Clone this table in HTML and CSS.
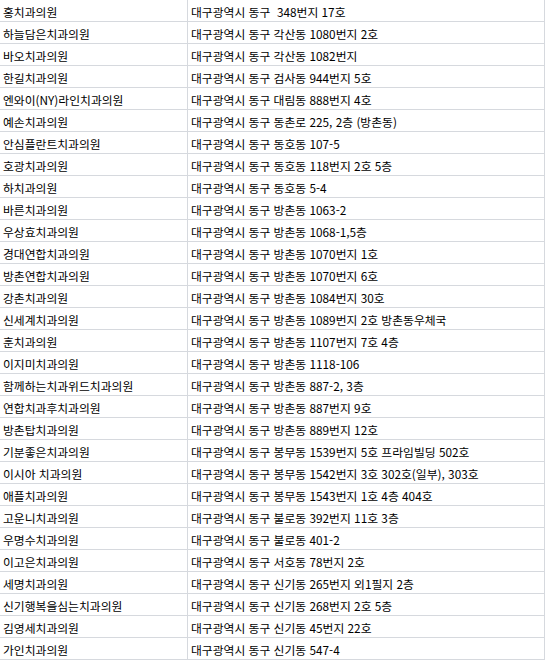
FILE: index.html
```html
<!DOCTYPE html>
<html lang="ko">
<head>
<meta charset="utf-8">
<title>치과의원 목록</title>
<link rel="stylesheet" href="styles.css">
</head>
<body>
<div class="sheet">
<div class="row"><div class="cell">홍치과의원</div><div class="cell">대구광역시 동구&nbsp; 348번지 17호</div></div>
<div class="row"><div class="cell">하늘담은치과의원</div><div class="cell">대구광역시 동구 각산동 1080번지 2호</div></div>
<div class="row"><div class="cell">바오치과의원</div><div class="cell">대구광역시 동구 각산동 1082번지</div></div>
<div class="row"><div class="cell">한길치과의원</div><div class="cell">대구광역시 동구 검사동 944번지 5호</div></div>
<div class="row"><div class="cell">엔와이(NY)라인치과의원</div><div class="cell">대구광역시 동구 대림동 888번지 4호</div></div>
<div class="row"><div class="cell">예손치과의원</div><div class="cell">대구광역시 동구 동촌로 225, 2층 (방촌동)</div></div>
<div class="row"><div class="cell">안심플란트치과의원</div><div class="cell">대구광역시 동구 동호동 107-5</div></div>
<div class="row"><div class="cell">호광치과의원</div><div class="cell">대구광역시 동구 동호동 118번지 2호 5층</div></div>
<div class="row"><div class="cell">하치과의원</div><div class="cell">대구광역시 동구 동호동 5-4</div></div>
<div class="row"><div class="cell">바른치과의원</div><div class="cell">대구광역시 동구 방촌동 1063-2</div></div>
<div class="row"><div class="cell">우상효치과의원</div><div class="cell">대구광역시 동구 방촌동 1068-1,5층</div></div>
<div class="row"><div class="cell">경대연합치과의원</div><div class="cell">대구광역시 동구 방촌동 1070번지 1호</div></div>
<div class="row"><div class="cell">방촌연합치과의원</div><div class="cell">대구광역시 동구 방촌동 1070번지 6호</div></div>
<div class="row"><div class="cell">강촌치과의원</div><div class="cell">대구광역시 동구 방촌동 1084번지 30호</div></div>
<div class="row"><div class="cell">신세계치과의원</div><div class="cell">대구광역시 동구 방촌동 1089번지 2호 방촌동우체국</div></div>
<div class="row"><div class="cell">훈치과의원</div><div class="cell">대구광역시 동구 방촌동 1107번지 7호 4층</div></div>
<div class="row"><div class="cell">이지미치과의원</div><div class="cell">대구광역시 동구 방촌동 1118-106</div></div>
<div class="row"><div class="cell">함께하는치과위드치과의원</div><div class="cell">대구광역시 동구 방촌동 887-2, 3층</div></div>
<div class="row"><div class="cell">연합치과후치과의원</div><div class="cell">대구광역시 동구 방촌동 887번지 9호</div></div>
<div class="row"><div class="cell">방촌탑치과의원</div><div class="cell">대구광역시 동구 방촌동 889번지 12호</div></div>
<div class="row"><div class="cell">기분좋은치과의원</div><div class="cell">대구광역시 동구 봉무동 1539번지 5호 프라임빌딩 502호</div></div>
<div class="row"><div class="cell">이시아 치과의원</div><div class="cell">대구광역시 동구 봉무동 1542번지 3호 302호(일부), 303호</div></div>
<div class="row"><div class="cell">애플치과의원</div><div class="cell">대구광역시 동구 봉무동 1543번지 1호 4층 404호</div></div>
<div class="row"><div class="cell">고운니치과의원</div><div class="cell">대구광역시 동구 불로동 392번지 11호 3층</div></div>
<div class="row"><div class="cell">우명수치과의원</div><div class="cell">대구광역시 동구 불로동 401-2</div></div>
<div class="row"><div class="cell">이고은치과의원</div><div class="cell">대구광역시 동구 서호동 78번지 2호</div></div>
<div class="row"><div class="cell">세명치과의원</div><div class="cell">대구광역시 동구 신기동 265번지 외1필지 2층</div></div>
<div class="row"><div class="cell">신기행복을심는치과의원</div><div class="cell">대구광역시 동구 신기동 268번지 2호 5층</div></div>
<div class="row"><div class="cell">김영세치과의원</div><div class="cell">대구광역시 동구 신기동 45번지 22호</div></div>
<div class="row"><div class="cell">가인치과의원</div><div class="cell">대구광역시 동구 신기동 547-4</div></div>
</div>
</body>
</html>
```
FILE: styles.css
```css
html, body {
  margin: 0;
  padding: 0;
  background: #ffffff;
}
.sheet {
  width: 545px;
  font-family: "Noto Sans CJK KR", "Noto Sans", sans-serif;
  font-size: 11.8px;
  color: #000000;
}
.row {
  display: grid;
  grid-template-columns: 188px 357px;
}
.cell {
  height: 22px;
  box-sizing: border-box;
  padding: 2px 0 0 3px;
  border-right: 1px solid #d6d9de;
  border-bottom: 1px solid #d6d9de;
  white-space: nowrap;
  overflow: hidden;
  line-height: 19px;
}
```
